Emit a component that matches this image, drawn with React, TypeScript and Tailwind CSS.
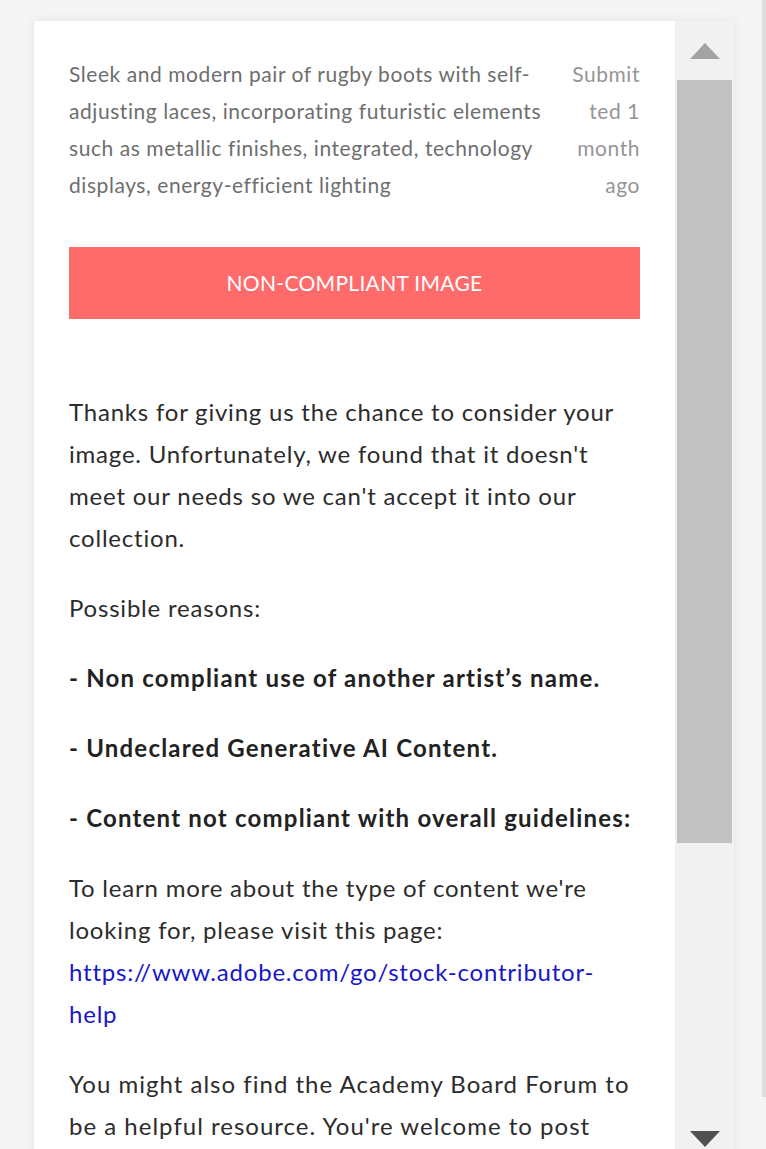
const reasons = [
  "- Non compliant use of another artist’s name.",
  "- Undeclared Generative AI Content.",
  "- Content not compliant with overall guidelines:",
];

const Triangle = ({ up, color }: { up?: boolean; color: string }) => (
  <svg width="30" height="16" viewBox="0 0 30 16">
    <polygon points={up ? "15,0 30,16 0,16" : "0,0 30,0 15,16"} fill={color} />
  </svg>
);

export default function App() {
  return (
    <div
      className="relative h-[1149px] w-full overflow-hidden bg-[#f5f5f5]"
      style={{ fontFamily: "Lato, 'Open Sans', sans-serif" }}
    >
      <div className="absolute right-0 top-0 h-[1097px] w-[4px] bg-[#dedede]" />

      <div className="ml-[34px] pt-[21px]">
        <div className="flex h-[1147px] w-[700px] shadow-[0_0_10px_rgba(0,0,0,0.08)]">
          <main className="w-[641px] overflow-hidden bg-white px-[35px] pt-[34px]">
            <div className="flex items-start tracking-[0.035em]">
              <p className="flex-1 text-[21px] leading-[37px] text-[#6e6e6e]">
                Sleek and modern pair of rugby boots with self-adjusting laces, incorporating
                futuristic elements such as metallic finishes, integrated, technology displays,
                energy-efficient lighting
              </p>
              <p className="ml-[20px] w-[72px] text-right text-[21px] leading-[37px] text-[#959595]">
                <span className="block">Submit</span>
                <span className="block">ted 1</span>
                <span className="block">month</span>
                <span className="block">ago</span>
              </p>
            </div>

            <button className="mt-[44px] flex h-[72px] w-full items-center justify-center bg-[#ff6b6b] text-[21px] tracking-[0.015em] text-white uppercase">
              Non-compliant image
            </button>

            <div className="mt-[72px] flex flex-col gap-[28px] text-[24px] leading-[42px] tracking-[0.033em] text-[#2c2c2c]">
              <p>
                Thanks for giving us the chance to consider your image. Unfortunately, we found
                that it doesn't meet our needs so we can't accept it into our collection.
              </p>
              <p>Possible reasons:</p>
              {reasons.map((r) => (
                <p key={r} className="font-bold tracking-[0.05em] text-[#222]">
                  {r}
                </p>
              ))}
              <p>
                To learn more about the type of content we're looking for, please visit this
                page:{" "}
                <a href="#" className="text-[#1717c9]">
                  https://www.adobe.com/go/stock-contributor-help
                </a>
              </p>
              <p className="tracking-[0.042em]">
                You might also find the Academy Board Forum to be a helpful resource. You're
                welcome to post your questions there.
              </p>
            </div>
          </main>

          <div className="flex w-[59px] flex-col bg-[#f1f1f1]">
            <div className="flex h-[59px] items-center justify-center">
              <Triangle up color="#a3a3a3" />
            </div>
            <div className="mx-[2px] h-[763px] bg-[#c1c1c1]" />
            <div className="flex-1" />
            <div className="flex h-[59px] items-center justify-center">
              <Triangle color="#505050" />
            </div>
          </div>
        </div>
      </div>
    </div>
  );
}
